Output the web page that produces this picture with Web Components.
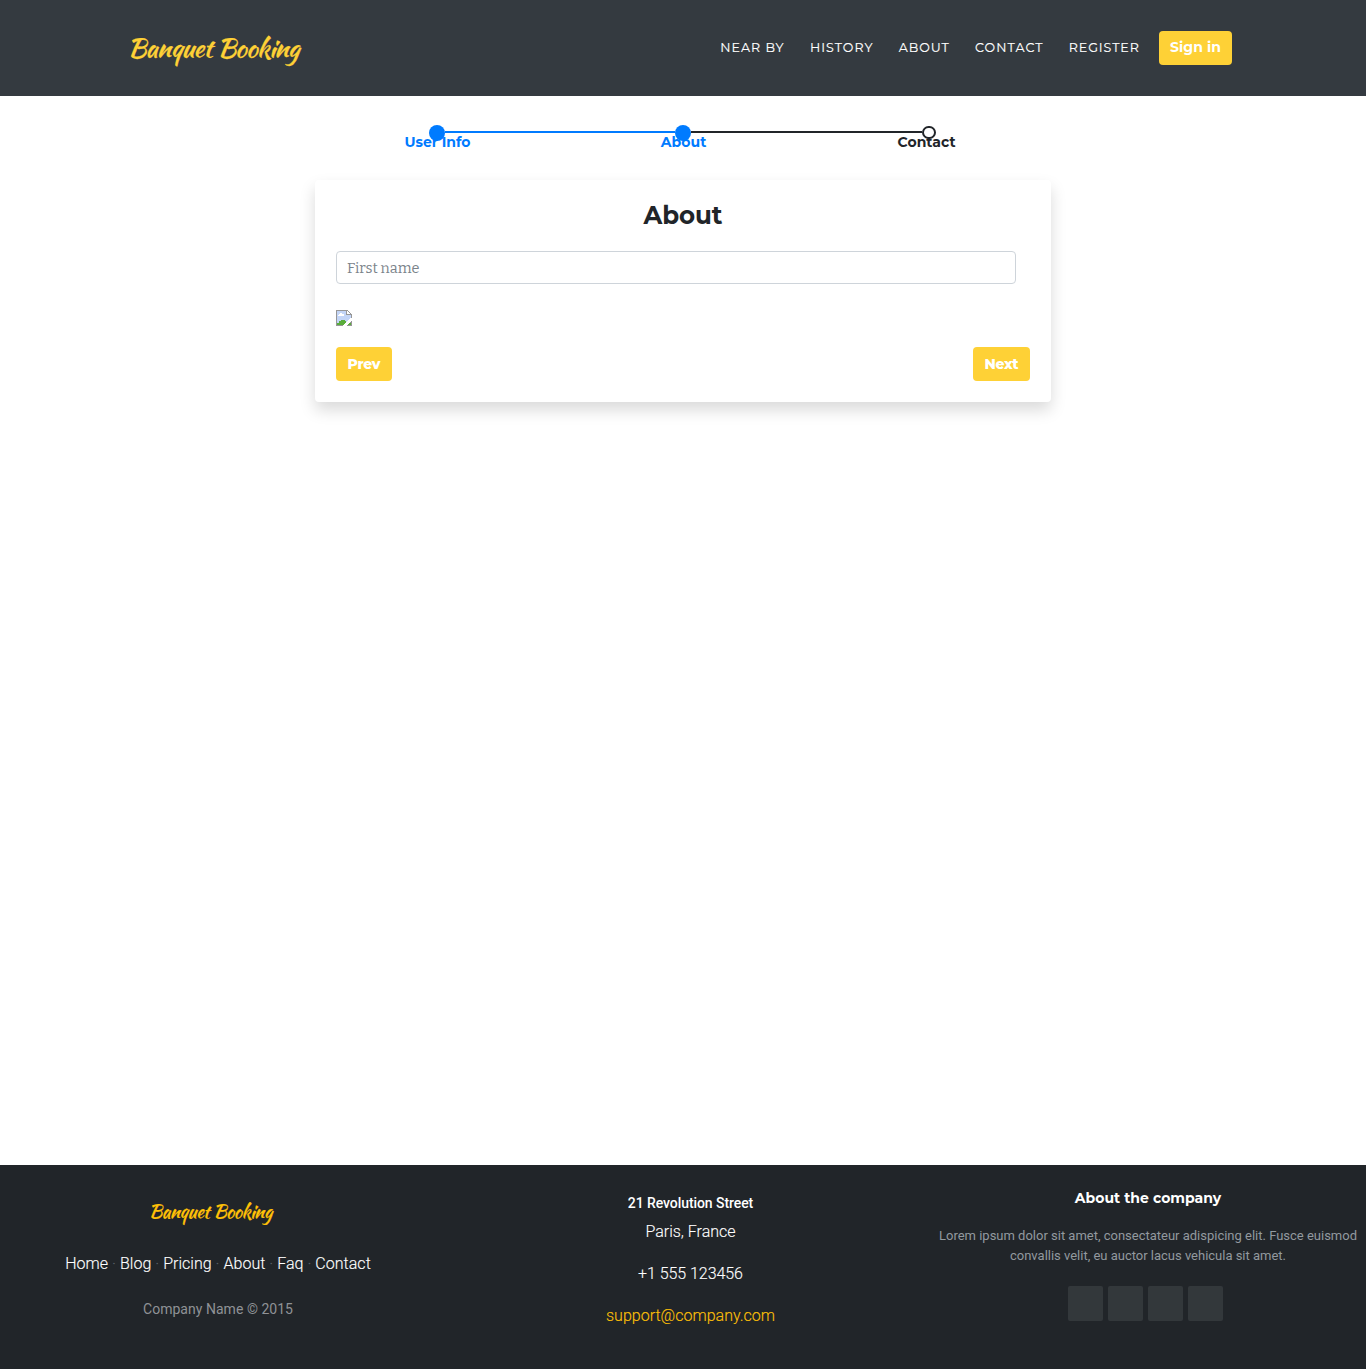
<!DOCTYPE html>
<html lang="en">
<head>
<meta charset="utf-8">
<title>Banquet Booking</title>
<style>
html,body{margin:0;padding:0}
body{font-family:Roboto,sans-serif;font-size:16px;color:#212529;background:#fff;
--head:Montserrat,Inter,sans-serif;--script:"Kaushan Script","Liberation Serif",serif;--yellow:#fed136}
</style>
</head>
<body>
<banquet-page></banquet-page>
<script>
// One line of text tracked out or in to a set width.
customElements.define('fit-line', class extends HTMLElement {
  connectedCallback() {
    const root = this.attachShadow({mode: 'open'});
    root.innerHTML = '<style>:host{display:block;white-space:nowrap}span{display:inline-block}</style><span><slot></slot></span>';
    const width = parseFloat(this.getAttribute('w'));
    this.style.width = width + 'px';
    const span = root.querySelector('span');
    const gaps = this.textContent.length - 1;
    const spacing = (width - span.getBoundingClientRect().width) / gaps;
    this.style.letterSpacing = spacing + 'px';
    span.style.marginRight = -spacing + 'px';
  }
});

function define(name, html) {
  customElements.define(name, class extends HTMLElement {
    constructor() {
      super();
      this.attachShadow({mode: 'open'}).innerHTML = html;
    }
  });
}

define('yellow-button', `
<style>:host{display:block}
button{display:flex;justify-content:center;align-items:center;width:100%;height:34px;padding:0 0 var(--lift,1px);border:0;border-radius:4px;
background:var(--yellow);color:#fff;font:var(--weight,800) 14px/20px var(--head)}</style>
<button type="button"><slot></slot></button>`);

define('top-bar', `
<style>
:host{display:flex;justify-content:space-between;height:96px;background:#343a40;padding:0 134px 0 127.5px;box-sizing:border-box}
.logo{margin-top:28px;font:400 26px/40px var(--script);color:var(--yellow);-webkit-text-stroke:.25px var(--yellow)}
nav{display:flex;height:34px;margin-top:31px;font:400 12.6px/33px var(--head);color:#fff}
nav > fit-line{margin-right:26.3px;-webkit-text-stroke:.15px #fff}
nav > fit-line.last{margin-right:20.2px}
yellow-button{width:73px;--lift:2px;--weight:700}
</style>
<fit-line class="logo" w="172">Banquet Booking</fit-line>
<nav>
<fit-line w="63.5">NEAR BY</fit-line><fit-line w="62.5">HISTORY</fit-line><fit-line w="50">ABOUT</fit-line>
<fit-line w="67.5">CONTACT</fit-line><fit-line class="last" w="70">REGISTER</fit-line>
<yellow-button><fit-line w="51">Sign in</fit-line></yellow-button>
</nav>`);

define('step-track', `
<style>
:host{display:grid;grid-template-columns:repeat(3,246px);width:738px;margin:28px auto 0;height:56px;font:700 14px/20px var(--head)}
.step{display:flex;flex-direction:column;align-items:center;position:relative;padding-top:8px;box-sizing:border-box}
.done{color:#007bff}
.step + .step::before{content:"";position:absolute;left:-115px;width:230px;top:7px;height:2px;background:currentColor}
.step.open::before{width:231px}
.dot{position:absolute;top:.5px;left:115px;width:16px;height:16px;border-radius:50%;background:#007bff}
.open .dot{top:1.5px;left:116px;width:13.5px;height:13.5px;box-sizing:border-box;background:#fff;border:2px solid #212529}
.done fit-line{margin-left:1px}
.open fit-line{margin-right:5px}
</style>
<div class="step done"><fit-line w="66">User Info</fit-line><i class="dot"></i></div>
<div class="step done"><fit-line w="45.5">About</fit-line><i class="dot"></i></div>
<div class="step open"><fit-line w="58">Contact</fit-line><i class="dot"></i></div>`);

define('broken-image', `
<style>:host{display:block;width:16px;height:16px}svg{display:block}</style>
<svg width="16" height="16" viewBox="0 0 16 16" shape-rendering="crispEdges">
<path d="M0 0H11L16 5V8L8 16H0Z" fill="#979797"/>
<path d="M1 1H10V5H15V7L7 15H1Z" fill="#c3d5f7"/>
<path d="M2 5H3V4H4V3H6V4H8V6H2Z" fill="#fff"/>
<path d="M1 15V13H3V11H5V10H9V11H10V12L7 15Z" fill="#5aad3c"/>
<path d="M11 1V4H14Z" fill="#fff"/>
<path d="M7 16V15H8V14H9V13H10V12H11V11H12V10H13V9H14V8H16V10H15V11H14V12H13V13H12V14H11V15H10V16Z" fill="#fff"/>
<path d="M11 16V15H12V14H13V13H14V12H15V11H16V16Z" fill="#979797"/>
<path d="M12 15V14H13V13H15V15Z" fill="#5aad3c"/>
</svg>`);

define('about-card', `
<style>
:host{display:block;width:736px;height:222px;margin:0 auto;box-sizing:border-box;padding:15px 21px 21px;background:#fff;border-radius:4px;box-shadow:0 8px 16px rgba(0,0,0,.15)}
h2{margin:0;display:flex;justify-content:center;font:700 24.5px/40px var(--head)}
.field{width:680px;height:33px;box-sizing:border-box;margin:16px 0 26px;padding:0 10px;border:1px solid #ced4da;border-radius:4px;
font:14.5px/33px "Roboto Slab","Bitter","Zilla Slab","Noto Serif","DejaVu Serif Condensed","DejaVu Serif",serif;color:#7b838a}
.actions{display:flex;justify-content:space-between;margin-top:21px}
.prev{width:56px}.next{width:57px}
</style>
<h2><fit-line w="79">About</fit-line></h2>
<div class="field"><fit-line w="72.5">First name</fit-line></div>
<broken-image></broken-image>
<div class="actions">
<yellow-button class="prev"><fit-line w="33">Prev</fit-line></yellow-button>
<yellow-button class="next"><fit-line w="34">Next</fit-line></yellow-button>
</div>`);

define('page-footer', `
<style>
:host{display:grid;grid-template-columns:436px 509px 1fr;height:204px;background:#212529;color:#fff;overflow:hidden}
section{display:flex;flex-direction:column;align-items:center}
.logo{margin:32px 15px 0 0;font:400 18.5px/30px var(--script);color:#ffc107;-webkit-text-stroke:.2px #ffc107}
.links{margin-top:25px;font:300 16px/24px Roboto}
.links i{font-style:normal;color:#596067}
.copy{margin-top:23px;font:400 14px/20px Roboto;color:#8f9296}
.street{margin-top:28px;font:500 14px/20px Roboto}
.row{font:300 16px/24px Roboto}
.links,.row{-webkit-text-stroke:.12px currentColor}
.mail{color:#ffc107}
h3{margin:23px 0 0;font:700 14px/20px var(--head)}
.lorem{font:400 13px/20px Roboto;color:#92999f}
.social{display:flex;gap:5px;margin:20px 6px 0 0}
.social a{width:35px;height:35px;border-radius:2px;background:#33383b}
.about{width:406px}
</style>
<section>
<fit-line class="logo" w="123.5">Banquet Booking</fit-line>
<fit-line class="links" w="305.5">Home <i>·</i> Blog <i>·</i> Pricing <i>·</i> About <i>·</i> Faq <i>·</i> Contact</fit-line>
<fit-line class="copy" w="150">Company Name © 2015</fit-line>
</section>
<section>
<fit-line class="street" w="125.5">21 Revolution Street</fit-line>
<fit-line class="row" style="margin-top:7px" w="90">Paris, France</fit-line>
<fit-line class="row" style="margin-top:18px" w="105">+1 555 123456</fit-line>
<fit-line class="row mail" style="margin-top:18px" w="169">support@company.com</fit-line>
</section>
<section class="about">
<h3><fit-line w="146.5">About the company</fit-line></h3>
<fit-line class="lorem" style="margin-top:18px" w="418">Lorem ipsum dolor sit amet, consectateur adispicing elit. Fusce euismod</fit-line>
<fit-line class="lorem" w="276">convallis velit, eu auctor lacus vehicula sit amet.</fit-line>
<div class="social"><a></a><a></a><a></a><a></a></div>
</section>`);

define('banquet-page', `
<style>
:host{display:flex;flex-direction:column;height:1369px}
main{flex:1}
</style>
<top-bar></top-bar>
<main><step-track></step-track><about-card></about-card></main>
<page-footer></page-footer>`);
</script>
</body>
</html>
